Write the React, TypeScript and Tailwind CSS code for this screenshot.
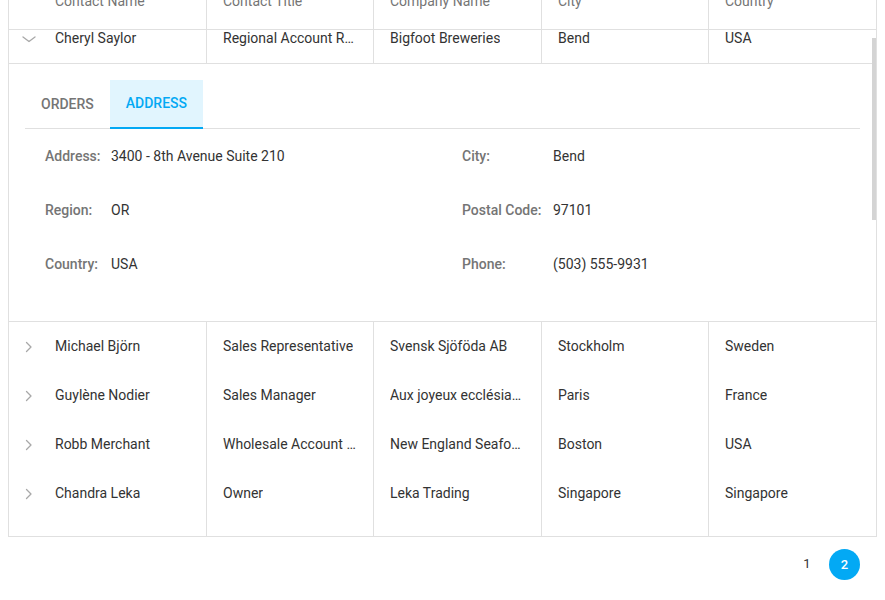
import React from 'react';

type Row = { name: string; title: string; company: string; city: string; country: string };

const master: Row = { name: 'Cheryl Saylor', title: 'Regional Account Representative', company: 'Bigfoot Breweries', city: 'Bend', country: 'USA' };

const rows: Row[] = [
  { name: 'Michael Björn', title: 'Sales Representative', company: 'Svensk Sjöföda AB', city: 'Stockholm', country: 'Sweden' },
  { name: 'Guylène Nodier', title: 'Sales Manager', company: 'Aux joyeux ecclésiastiques', city: 'Paris', country: 'France' },
  { name: 'Robb Merchant', title: 'Wholesale Account Agent', company: 'New England Seafood Cannery', city: 'Boston', country: 'USA' },
  { name: 'Chandra Leka', title: 'Owner', company: 'Leka Trading', city: 'Singapore', country: 'Singapore' },
  { name: 'Shelley Burke', title: 'Order Administrator', company: 'New Orleans Cajun Delights', city: 'New Orleans', country: 'USA' },
];

const fields = [
  ['Address:', '3400 - 8th Avenue Suite 210', 'City:', 'Bend'],
  ['Region:', 'OR', 'Postal Code:', '97101'],
  ['Country:', 'USA', 'Phone:', '(503) 555-9931'],
];

function Chevron({ open }: { open?: boolean }) {
  return (
    <svg width="18" height="18" viewBox="0 0 18 18" fill="none" stroke="#a8a8a8" strokeWidth="1.3" strokeLinecap="round" strokeLinejoin="round">
      {open ? <path d="M3 7 L9 11.5 L15 7" /> : <path d="M6.5 4.5 L11 9 L6.5 13.5" />}
    </svg>
  );
}

function DataRow({ row, open, className = 'h-[49px]' }: { row: Row; open?: boolean; className?: string }) {
  return (
    <div className={`flex text-[14px] text-[#333] ${className}`}>
      <div className="w-[197px] flex items-center">
        <div className="w-[46px] pl-[11px] flex items-center">
          <Chevron open={open} />
        </div>
        <span className="truncate pr-4">{row.name}</span>
      </div>
      <Cell w="w-[167px]">{row.title}</Cell>
      <Cell w="w-[168px]">{row.company}</Cell>
      <Cell w="w-[167px]">{row.city}</Cell>
      <Cell w="w-[167px]">{row.country}</Cell>
    </div>
  );
}

function Cell({ w, children }: { w: string; children: React.ReactNode }) {
  return (
    <div className={`${w} border-l border-[#e0e0e0] flex items-center px-4 min-w-0`}>
      <span className="truncate">{children}</span>
    </div>
  );
}

export default function App() {
  return (
    <div className="w-[885px] h-[600px] bg-white overflow-hidden [font-family:Roboto,sans-serif]">
      <div className="mx-[8px] w-[869px] border-x border-b border-[#e0e0e0]">
        {/* header, scrolled partly out of view */}
        <div className="h-[30px] overflow-hidden">
          <div className="-mt-[27px] h-[57px] flex border-b border-[#e0e0e0] text-[14px] text-[#757575]">
            <div className="w-[197px] flex items-center pl-[46px]">Contact Name</div>
            <div className="w-[167px] border-l border-[#e0e0e0] flex items-center px-4">Contact Title</div>
            <div className="w-[168px] border-l border-[#e0e0e0] flex items-center px-4">Company Name</div>
            <div className="w-[167px] border-l border-[#e0e0e0] flex items-center px-4">City</div>
            <div className="w-[167px] border-l border-[#e0e0e0] flex items-center px-4">Country</div>
          </div>
        </div>

        {/* rows view */}
        <div className="relative h-[506px] overflow-hidden">
          <div className="-mt-[16px]">
            <DataRow row={master} open className="h-[50px] border-b border-[#e0e0e0]" />

            <div className="h-[258px] border-b border-[#e0e0e0] px-4 pt-4">
              <div className="flex h-[49px] border-b border-[#e0e0e0] text-[14px] font-medium">
                <div className="px-4 flex items-center text-[#757575]">ORDERS</div>
                <div className="px-4 flex items-center text-[#03a9f4] bg-[#e1f5fe] border-b-2 border-[#03a9f4] -mb-px">ADDRESS</div>
              </div>
              <div className="pl-5">
                {fields.map(([l1, v1, l2, v2]) => (
                  <div key={l1} className="h-[54px] grid grid-cols-[417px_1fr] items-center text-[14px]">
                    <div className="flex">
                      <span className="w-[66px] font-medium text-[#757575]">{l1}</span>
                      <span className="text-[#333]">{v1}</span>
                    </div>
                    <div className="flex">
                      <span className="w-[91px] font-medium text-[#757575]">{l2}</span>
                      <span className="text-[#333]">{v2}</span>
                    </div>
                  </div>
                ))}
              </div>
            </div>

            {rows.map((r) => (
              <DataRow key={r.name} row={r} />
            ))}
          </div>
          <div className="absolute right-0 top-[8px] w-[4px] h-[182px] bg-[#d4d4d4]" />
        </div>
      </div>

      {/* pager */}
      <div className="flex justify-end gap-[7px] pr-[25px] pt-[12px] text-[13px]">
        <div className="w-[30px] h-[30px] rounded-full flex items-center justify-center text-[#333]">1</div>
        <div className="w-[31px] h-[31px] rounded-full flex items-center justify-center bg-[#03a9f4] text-white font-medium">2</div>
      </div>
    </div>
  );
}
